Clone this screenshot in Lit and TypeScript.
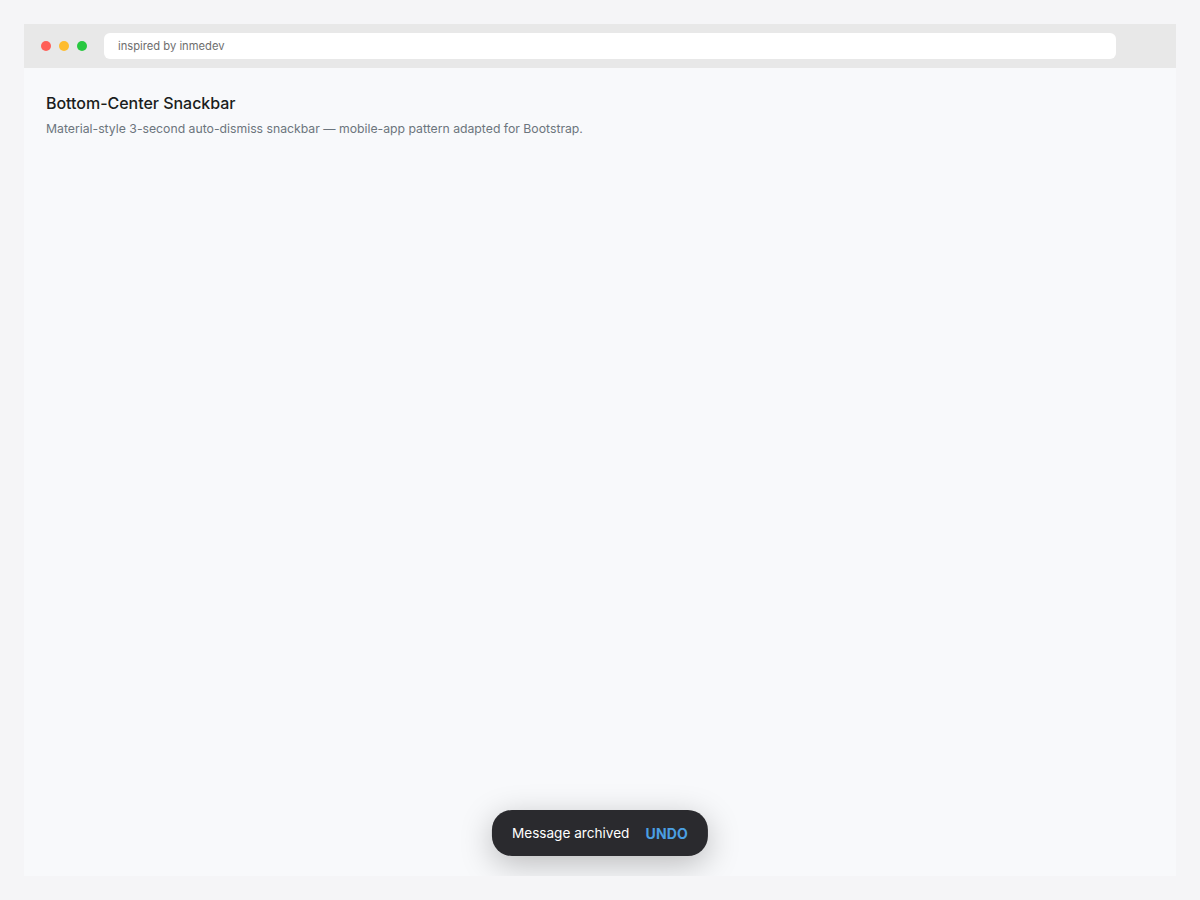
import { LitElement, html, css } from "lit";
import { customElement } from "lit/decorators.js";

@customElement("app-root")
export class AppRoot extends LitElement {
  static styles = css`
    :host {
      display: block;
      box-sizing: border-box;
      height: 900px;
      padding: 24px;
      background: #f5f5f7;
      font-family: Inter, "Liberation Sans", sans-serif;
    }
    .frame {
      position: relative;
      height: 852px;
      overflow: hidden;
      background: #f8f9fb;
      display: flex;
      flex-direction: column;
    }
    .toolbar {
      height: 44px;
      flex: none;
      display: flex;
      align-items: center;
      background: #e8e8e8;
      padding: 0 60px 0 17px;
    }
    .dots { display: flex; gap: 8px; margin-right: 17px; }
    .dot { width: 10px; height: 10px; border-radius: 50%; }
    .red { background: #ff5f57; }
    .yellow { background: #febc2e; }
    .green { background: #28c840; }
    .address {
      flex: 1;
      height: 26px;
      box-sizing: border-box;
      display: flex;
      align-items: center;
      padding: 0 14px;
      background: #fff;
      border-radius: 6px;
      font-size: 11.2px;
      color: #6e6e6e;
    }
    .content { padding: 24px 22px; }
    h1 {
      margin: 0 0 5px;
      font-size: 16px;
      line-height: 23px;
      font-weight: 500;
      letter-spacing: -0.03px;
      color: #1a1d20;
    }
    p {
      margin: 0;
      font-size: 12.24px;
      line-height: 18px;
      color: #6c757d;
    }
    .snackbar {
      position: absolute;
      left: 50%;
      bottom: 20px;
      transform: translateX(-50%);
      height: 46px;
      box-sizing: border-box;
      display: flex;
      align-items: center;
      gap: 16px;
      padding: 0 20px;
      border-radius: 20px;
      background: #2a2a2e;
      color: #fff;
      font-size: 13.6px;
      white-space: nowrap;
      box-shadow: 0 8px 32px rgba(0, 0, 0, 0.25);
    }
    .undo {
      color: #4a9fe3;
      font-size: 14px;
      font-weight: 700;
      letter-spacing: 0.2px;
    }
  `;

  render() {
    return html`
      <div class="frame">
        <div class="toolbar">
          <div class="dots">
            <span class="dot red"></span>
            <span class="dot yellow"></span>
            <span class="dot green"></span>
          </div>
          <div class="address">inspired by inmedev</div>
        </div>
        <div class="content">
          <h1>Bottom-Center Snackbar</h1>
          <p>Material-style 3-second auto-dismiss snackbar — mobile-app pattern adapted for Bootstrap.</p>
        </div>
        <div class="snackbar">
          <span>Message archived</span>
          <span class="undo">UNDO</span>
        </div>
      </div>
    `;
  }
}
